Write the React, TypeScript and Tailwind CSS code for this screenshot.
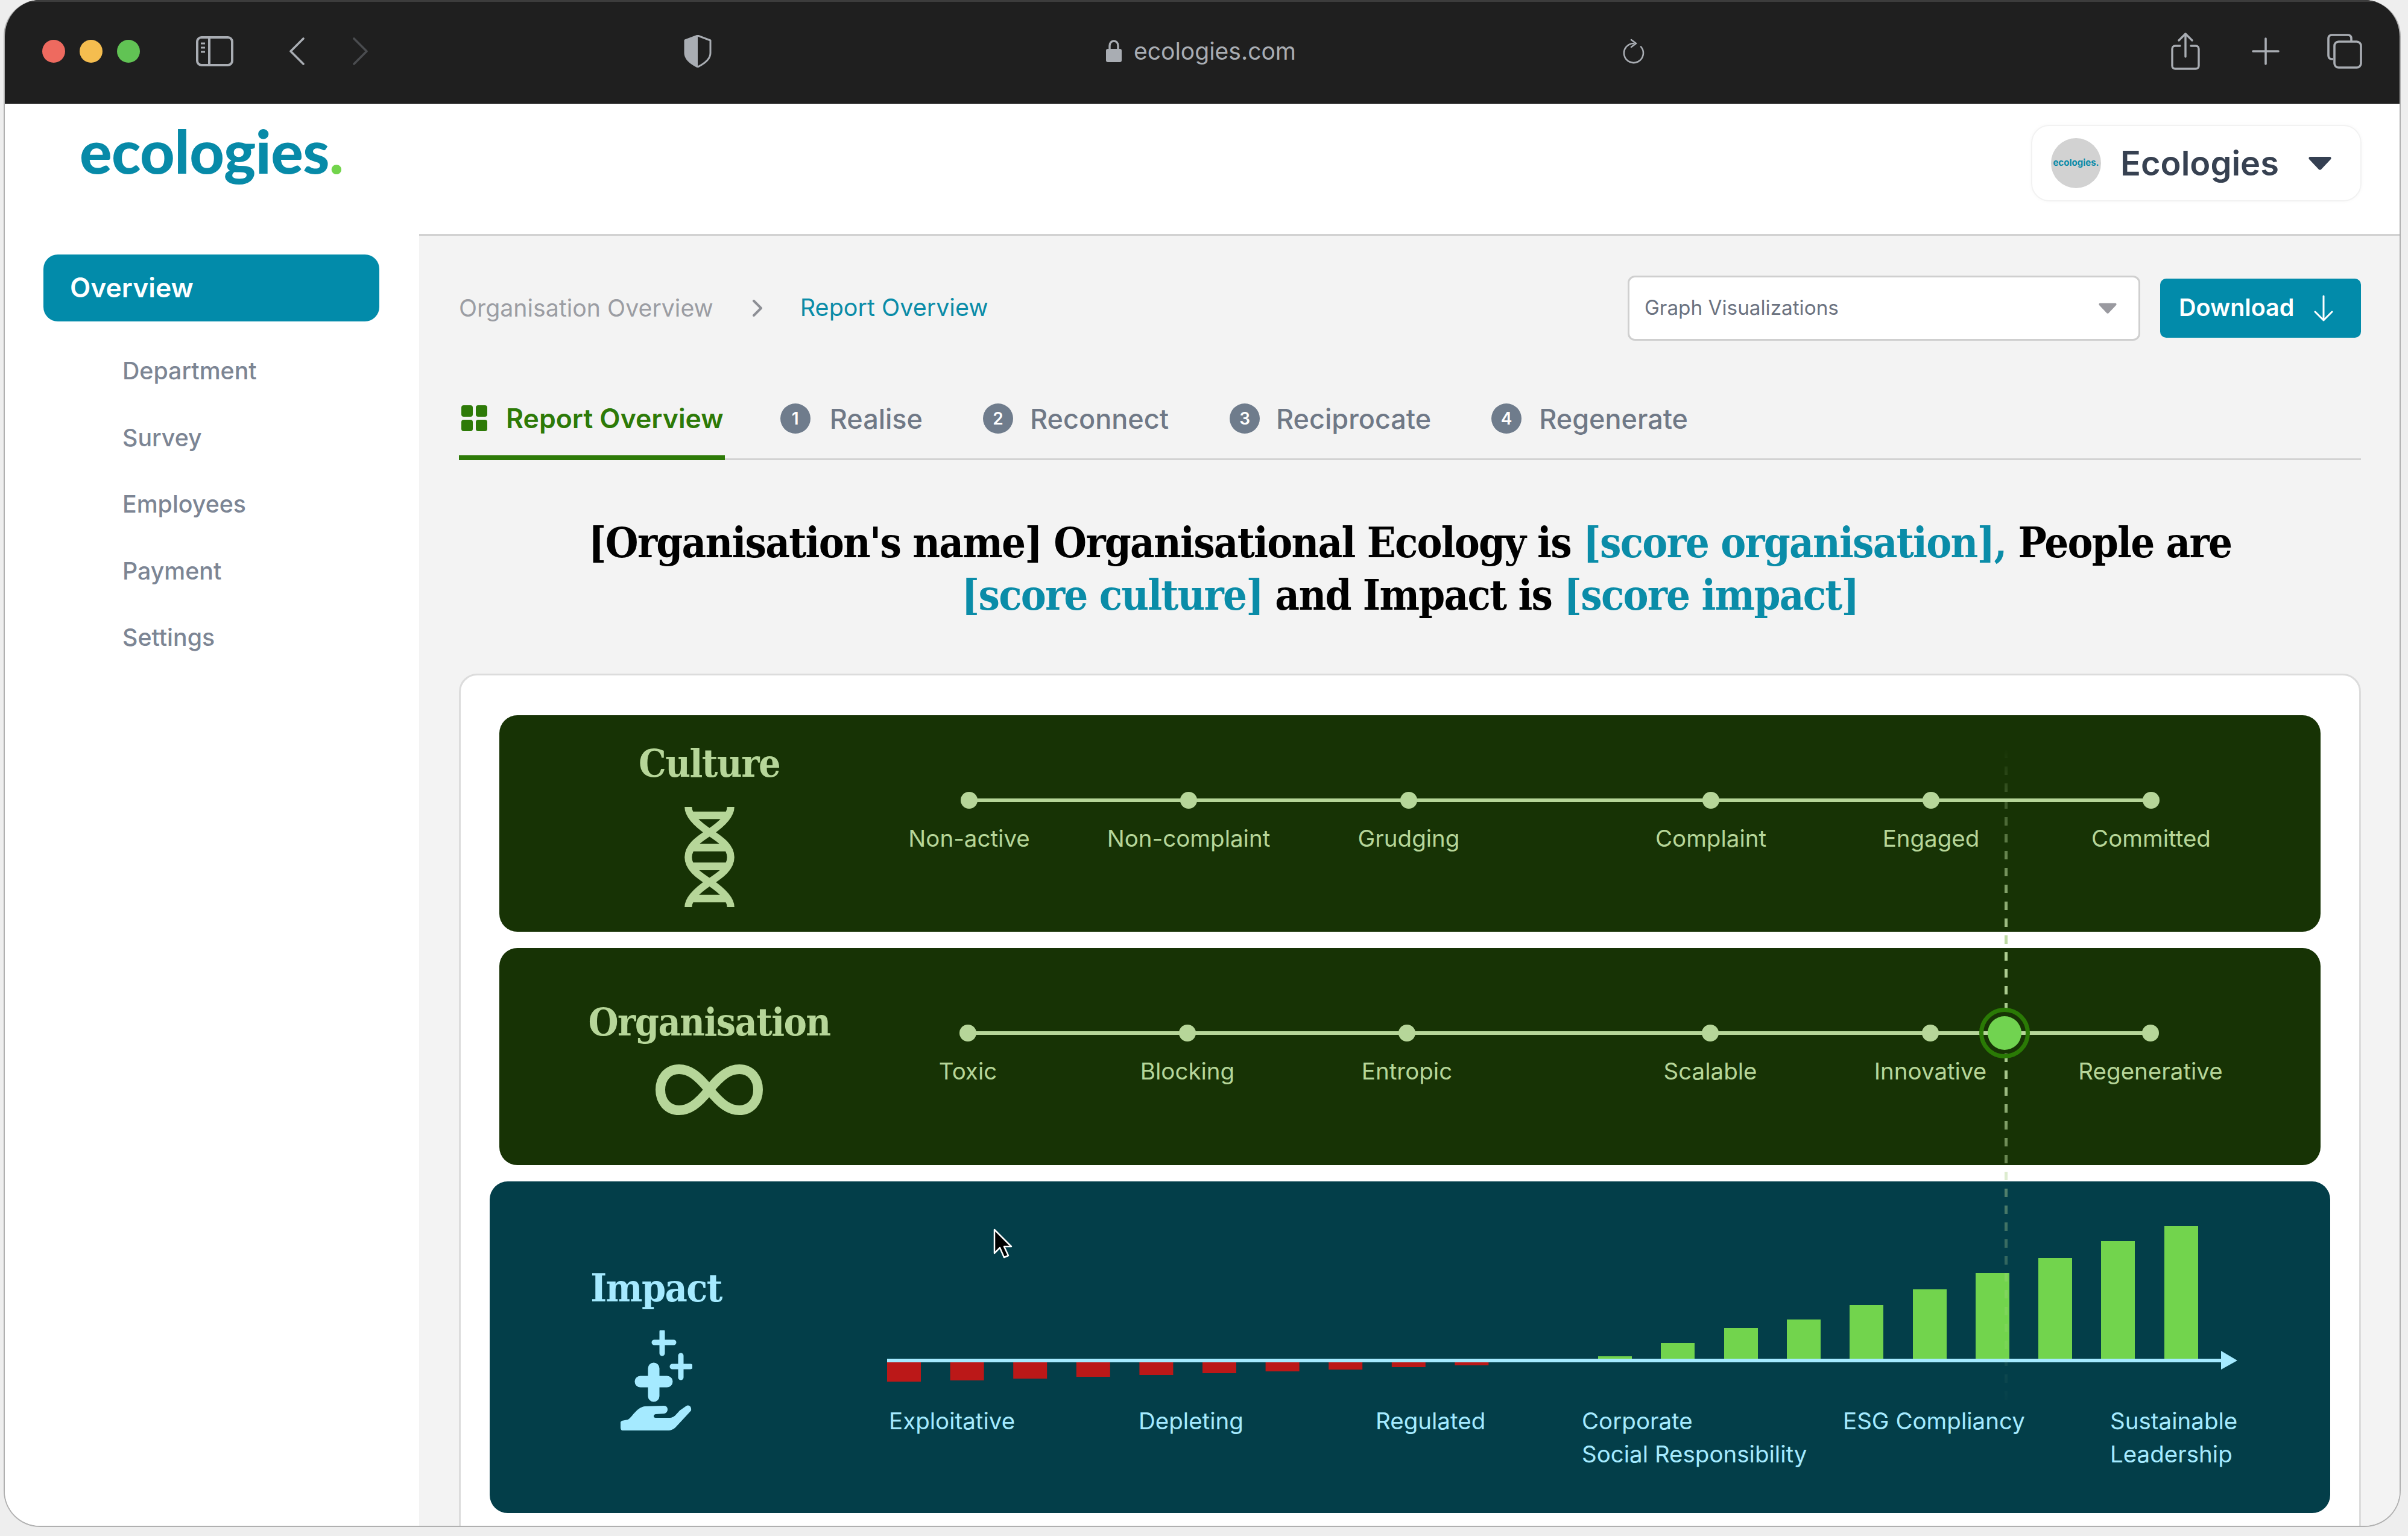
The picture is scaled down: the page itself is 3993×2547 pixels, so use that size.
import React from "react";

const SERIF = "font-['DejaVu_Serif_Condensed','Liberation_Serif',serif] font-bold";

const sideItems = ["Department", "Survey", "Employees", "Payment", "Settings"];
const tabs = [
  { n: 1, label: "Realise", cls: "ml-[92px] gap-[32px]" },
  { n: 2, label: "Reconnect", cls: "ml-[100px] gap-[28px]" },
  { n: 3, label: "Reciprocate", cls: "ml-[101px] gap-[27px]" },
  { n: 4, label: "Regenerate", cls: "ml-[100px] gap-[29px]" },
];
const culture = [
  { label: "Non-active", cls: "" },
  { label: "Non-complaint", cls: "ml-[336px]" },
  { label: "Grudging", cls: "ml-[337px]" },
  { label: "Complaint", cls: "ml-[473px]" },
  { label: "Engaged", cls: "ml-[337px]" },
  { label: "Committed", cls: "ml-[337px]" },
];
const organisation = [
  { label: "Toxic", cls: "" },
  { label: "Blocking", cls: "ml-[336px]" },
  { label: "Entropic", cls: "ml-[336px]" },
  { label: "Scalable", cls: "ml-[475px]" },
  { label: "Innovative", cls: "ml-[337px]" },
  { label: "Regenerative", cls: "ml-[337px]" },
];
const red = [32, 30, 27, 24, 21, 18, 15, 12, 8, 5];
const green = [2650, 2754, 2859, 2963, 3067, 3172, 3276, 3380, 3484, 3589];
const greenTop = [2252, 2230, 2205, 2191, 2167, 2141, 2114, 2089, 2061, 2036];

function SidebarIcon() {
  return (
    <svg width="62" height="50" viewBox="0 0 62 50" fill="none" stroke="#a9adb3" strokeWidth="4">
      <rect x="2" y="2" width="58" height="46" rx="7" />
      <path d="M22 2V48" />
      <path d="M8 12H15M8 19H15M8 26H15" strokeWidth="3" />
    </svg>
  );
}
function Shield() {
  return (
    <svg width="46" height="54" viewBox="0 0 46 54" fill="none">
      <path d="M23 1L44 9V30C44 41 33 48 23 53C13 48 2 41 2 30V9Z" stroke="#a9adb3" strokeWidth="3" strokeLinejoin="round" />
      <path d="M23 1V53C13 48 2 41 2 30V9Z" fill="#a9adb3" />
    </svg>
  );
}
function Reload() {
  return (
    <svg width="36" height="42" viewBox="0 0 36 42" fill="none" stroke="#a9adb3" strokeWidth="2.6" strokeLinecap="round" strokeLinejoin="round">
      <path d="M18 8A16 16 0 1 0 30 13.5" />
      <path d="M14 2L22 8L14 14" />
    </svg>
  );
}
function Share() {
  return (
    <svg width="48" height="62" viewBox="0 0 48 62" fill="none" stroke="#a9adb3" strokeWidth="3.4" strokeLinecap="round" strokeLinejoin="round">
      <path d="M15 22H7C4 22 2 24 2 27V55C2 58 4 60 7 60H41C44 60 46 58 46 55V27C46 24 44 22 41 22H33" />
      <path d="M24 40V3M13 13L24 2L35 13" />
    </svg>
  );
}
function Plus() {
  return (
    <svg width="46" height="46" viewBox="0 0 46 46" fill="none" stroke="#a9adb3" strokeWidth="3.6" strokeLinecap="round">
      <path d="M23 2V44M2 23H44" />
    </svg>
  );
}
function TabsIcon() {
  return (
    <svg width="58" height="58" viewBox="0 0 58 58" fill="none" stroke="#a9adb3" strokeWidth="3.6" strokeLinejoin="round">
      <path d="M10 42H8C4 42 2 40 2 36V8C2 4 4 2 8 2H34C38 2 40 4 40 8V13" />
      <rect x="12" y="13" width="44" height="43" rx="7" />
    </svg>
  );
}
function Lock() {
  return (
    <svg width="26" height="37" viewBox="0 0 26 37" fill="none">
      <path d="M6 17V10C6 5 9 2 13 2C17 2 20 5 20 10V17" stroke="#a9adb3" strokeWidth="3.4" />
      <rect x="0" y="15" width="26" height="22" rx="3" fill="#a9adb3" />
    </svg>
  );
}
function Caret({ w, h, color }: { w: number; h: number; color: string }) {
  return (
    <svg width={w} height={h} viewBox="0 0 40 24">
      <path d="M3 1H37C39 1 40 3 39 5L22 23C21 24 19 24 18 23L1 5C0 3 1 1 3 1Z" fill={color} />
    </svg>
  );
}
function Dna() {
  return (
    <svg width="83" height="166" viewBox="0 0 82 165" fill="none" stroke="#b6d699">
      <path d="M6 0C6 14 20 28 41 42C60 54 76 66 76 83C76 100 60 112 41 124C20 138 6 152 6 165" strokeWidth="12" />
      <path d="M76 0C76 14 62 28 41 42C22 54 6 66 6 83C6 100 22 112 41 124C62 138 76 152 76 165" strokeWidth="12" />
      <path d="M12 14H70M12 67H70M12 98H70M12 151H70" strokeWidth="12.5" />
    </svg>
  );
}
function Infinity() {
  return (
    <svg width="180" height="84" viewBox="0 0 180 84" fill="none" stroke="#b6d699" strokeWidth="16">
      <path d="M90 42C70 17 56 8 40 8C21 8 9 23 9 42C9 61 21 76 40 76C56 76 70 67 90 42C110 17 124 8 140 8C159 8 171 23 171 42C171 61 159 76 140 76C124 76 110 67 90 42Z" />
    </svg>
  );
}
function Hand() {
  return (
    <svg width="119" height="166" viewBox="0 0 119 166" fill="#a5eaff">
      <path d="M69 2V38M56 20H88" stroke="#a5eaff" strokeWidth="9" strokeLinecap="round" />
      <path d="M100 42V78M86 60H116" stroke="#a5eaff" strokeWidth="9" strokeLinecap="round" />
      <path d="M55 63V109M33 85H77" stroke="#a5eaff" strokeWidth="19" strokeLinecap="round" strokeLinejoin="round" />
      <path d="M2 150L12 148C18 146 26 128 40 126L72 125C80 125 80 137 72 138L58 139C54 140 54 145 58 145L82 145C88 145 92 140 98 133L108 126C114 122 118 127 117 133L92 160C88 164 84 166 78 166L4 166C1 166 0 164 0 160V152Z" />
    </svg>
  );
}
function Cursor() {
  return (
    <svg width="32" height="50" viewBox="0 0 32 50">
      <path d="M2 2V41L11 32L18 48L25 45L18 30H30Z" fill="#000" stroke="#fff" strokeWidth="2.5" strokeLinejoin="round" />
    </svg>
  );
}

function Track({ stops, pl, children }: { stops: { label: string; cls: string }[]; pl: string; children?: React.ReactNode }) {
  return (
    <div className={`${pl} pt-[127px]`}>
      <div className="relative flex">
        <div className="absolute left-[14px] right-[14px] top-[11px] h-[6px] bg-[#b6d699]" />
        {stops.map((s) => (
          <div key={s.label} className={`relative flex w-[28px] flex-col items-center ${s.cls}`}>
            <div className="h-[28px] w-[28px] rounded-full bg-[#b6d699]" />
            <div className="mt-[26px] whitespace-nowrap text-[38.5px] leading-[46px] text-[#b6d699]">{s.label}</div>
          </div>
        ))}
        {children}
      </div>
    </div>
  );
}

export default function App() {
  return (
    <div className="relative h-[2547px] w-[3993px] overflow-hidden bg-[#eeeeee] pl-[6px] font-['Inter',sans-serif]">
      <div className="flex h-[2532px] w-[3975px] flex-col overflow-hidden rounded-[60px] border-x-[2px] border-b-[2px] border-[#b0b0b0] bg-white">
        {/* Title bar */}
        <div className="flex h-[172px] shrink-0 items-center border-t-[3px] border-[#3c3c3c] bg-[#1f1f1f] pb-[6px]">
          <div className="ml-[62px] h-[38px] w-[38px] rounded-full bg-[#ee6a5f]" />
          <div className="ml-[24px] h-[38px] w-[38px] rounded-full bg-[#f5bd4f]" />
          <div className="ml-[24px] h-[38px] w-[38px] rounded-full bg-[#61c354]" />
          <div className="ml-[93px]"><SidebarIcon /></div>
          <svg className="ml-[92px]" width="26" height="46" viewBox="0 0 26 46" fill="none" stroke="#a9adb3" strokeWidth="3.6" strokeLinecap="round" strokeLinejoin="round"><path d="M24 2L3 23L24 44" /></svg>
          <svg className="ml-[80px]" width="26" height="46" viewBox="0 0 26 46" fill="none" stroke="#4a4c4f" strokeWidth="3.6" strokeLinecap="round" strokeLinejoin="round"><path d="M2 2L23 23L2 44" /></svg>
          <div className="ml-[523px]"><Shield /></div>
          <div className="ml-[654px] flex items-center gap-[20px]">
            <Lock />
            <span className="text-[39px] leading-none text-[#a9adb3]">ecologies.com</span>
          </div>
          <div className="ml-[542px]"><Reload /></div>
          <div className="ml-[873px]"><Share /></div>
          <div className="ml-[86px]"><Plus /></div>
          <div className="ml-[79px]"><TabsIcon /></div>
        </div>

        <div className="flex min-h-0 flex-1">
          {/* Sidebar */}
          <div className="w-[687px] shrink-0 bg-white">
            <div className="flex h-[250px] items-start pl-[124px] pt-[18px] font-['Lato',sans-serif] text-[100px] font-black leading-[118px] tracking-[-0.5px] text-[#078aa8]">
              ecologies<span className="text-[#72d44b]">.</span>
            </div>
            <div className="ml-[64px] flex h-[111px] w-[557px] items-center rounded-[24px] bg-[#028baa] pl-[44px] text-[44.5px] font-semibold text-white">Overview</div>
            <div className="mt-[57px] flex flex-col gap-[60.5px] pl-[195px]">
              {sideItems.map((t) => (
                <div key={t} className="text-[39.3px] font-medium leading-[50px] text-[#7c8594]">{t}</div>
              ))}
            </div>
          </div>

          {/* Right column */}
          <div className="flex min-w-0 flex-1 flex-col">
            <div className="flex h-[219px] shrink-0 items-start justify-end border-b-[3px] border-[#d2d2d2] bg-white pr-[63px] pt-[35px]">
              <div className="flex h-[127px] w-[548px] items-center rounded-[30px] border-[2px] border-[#f2f2f2] pl-[31px] shadow-[0_0_6px_rgba(0,0,0,0.03)]">
                <div className="flex h-[83px] w-[83px] items-center justify-center rounded-full bg-[#d2d2d2] text-[15px] font-bold text-[#078aa8]">ecologies.</div>
                <span className="ml-[32px] text-[56px] font-semibold leading-none text-[#374151]">Ecologies</span>
                <div className="ml-[48px]"><Caret w={40} h={23} color="#354052" /></div>
              </div>
            </div>

            <div className="min-h-0 flex-1 overflow-hidden bg-[#f3f3f3] pl-[66px] pr-[64px] pt-[66px]">
              {/* Toolbar */}
              <div className="flex h-[108px] items-center">
                <span className="text-[39.3px] leading-none text-[#9b9da3]">Organisation Overview</span>
                <svg className="ml-[63px]" width="20" height="28" viewBox="0 0 20 28" fill="none" stroke="#8d8f95" strokeWidth="4" strokeLinecap="round" strokeLinejoin="round"><path d="M4 2L16 14L4 26" /></svg>
                <span className="ml-[61px] text-[39.5px] leading-none text-[#0a8ca8]">Report Overview</span>
                <div className="ml-auto flex h-[108px] w-[850px] items-center justify-between rounded-[12px] border-[3px] border-[#cfcfcf] bg-white pl-[25px] pr-[34px]">
                  <span className="text-[33.3px] text-[#6b7280]">Graph Visualizations</span>
                  <Caret w={34} h={18} color="#9a9aa0" />
                </div>
                <div className="ml-[33px] flex h-[98px] w-[333px] items-center rounded-[10px] bg-[#028baa] pl-[31px]">
                  <span className="text-[39.5px] font-semibold text-white">Download</span>
                  <svg className="ml-[32px]" width="34" height="44" viewBox="0 0 34 44" fill="none" stroke="#fff" strokeWidth="3" strokeLinecap="round" strokeLinejoin="round"><path d="M17 2V42M3 28L17 42L31 28" /></svg>
                </div>
              </div>

              {/* Tabs */}
              <div className="mt-[95px] flex border-b-[3px] border-[#d2d2d2]">
                <div className="-mb-[3px] flex h-[103px] items-start rounded-t-[4px] border-b-[8px] border-[#2d7a07] pl-[4px] pr-[2px] pt-[12px]">
                  <div className="grid w-[43px] grid-cols-2 gap-[5px]">
                    <div className="h-[19px] rounded-[4px] bg-[#2d7a07]" />
                    <div className="h-[19px] rounded-[4px] bg-[#2d7a07]" />
                    <div className="h-[19px] rounded-[4px] bg-[#2d7a07]" />
                    <div className="h-[19px] rounded-[4px] bg-[#2d7a07]" />
                  </div>
                  <span className="-mt-[3px] ml-[31px] text-[44.6px] font-semibold leading-[50px] text-[#2d7a07]">Report Overview</span>
                </div>
                {tabs.map((t) => (
                  <div key={t.n} className={`flex h-[68px] items-center ${t.cls}`}>
                    <div className="flex h-[50px] w-[50px] items-center justify-center rounded-full bg-[#6f7c8c] text-[28px] font-semibold text-white">{t.n}</div>
                    <span className="text-[45px] font-medium leading-none text-[#6f7886]">{t.label}</span>
                  </div>
                ))}
              </div>

              {/* Headline */}
              <h1 className={`mt-[93px] text-center text-[70px] leading-[87px] tracking-[-1.8px] text-black ${SERIF}`}>
                [Organisation's name] Organisational Ecology is <span className="text-[#0a8ca8]">[score organisation],</span> People are
                <br />
                <span className="text-[#0a8ca8]">[score culture]</span> and Impact is <span className="text-[#0a8ca8]">[score impact]</span>
              </h1>

              {/* Card */}
              <div className="relative mt-[87px] h-[1500px] rounded-[30px] border-[3px] border-[#dcdcdc] bg-white px-[64px] pt-[66px]">
                {/* Culture */}
                <div className="flex h-[359px] rounded-[30px] bg-[#173305]">
                  <div className="flex w-[696px] shrink-0 flex-col items-center pt-[45px]">
                    <div className={`text-[64px] leading-[70px] tracking-[-1.6px] text-[#b6d699] ${SERIF}`}>Culture</div>
                    <div className="mt-[37px]"><Dna /></div>
                  </div>
                  <Track stops={culture} pl="pl-[69px]" />
                </div>

                {/* Organisation */}
                <div className="mt-[27px] flex h-[360px] rounded-[30px] bg-[#173305]">
                  <div className="flex w-[696px] shrink-0 flex-col items-center pt-[88px]">
                    <div className={`text-[64px] leading-[70px] tracking-[-1.6px] text-[#b6d699] ${SERIF}`}>Organisation</div>
                    <div className="mt-[35px]"><Infinity /></div>
                  </div>
                  <Track stops={organisation} pl="pl-[67px]">
                    <div className="absolute left-[1691px] top-[-28px] z-20 flex h-[84px] w-[84px] items-center justify-center rounded-full border-[7px] border-[#2a7a05]">
                      <div className="h-[56px] w-[56px] rounded-full bg-[#71d350]" />
                    </div>
                  </Track>
                </div>

                {/* Impact */}
                <div className="-mx-[16px] mt-[27px] flex h-[550px] rounded-[30px] bg-[#033e49]">
                  <div className="flex w-[552px] shrink-0 flex-col items-center pt-[142px]">
                    <div className={`text-[64px] leading-[70px] tracking-[-1.6px] text-[#a5eaff] ${SERIF}`}>Impact</div>
                    <div className="mt-[35px]"><Hand /></div>
                  </div>
                  <div className="ml-[107px] pt-[74px]">
                    <svg className="block" width="2239" height="264" viewBox="0 0 2239 264">
                      {red.map((h, i) => (
                        <rect key={i} x={i * 104.6} y={226} width={56} height={h} fill="#bb1818" />
                      ))}
                      {green.map((x, i) => (
                        <rect key={x} x={x - 1471} y={greenTop[i] - 2036} width={56} height={2256 - greenTop[i]} fill="#72d44d" />
                      ))}
                      <rect x="0" y="220" width="2216" height="6" fill="#a5eaff" />
                      <path d="M2212 207L2239 223L2212 238Z" fill="#a5eaff" />
                    </svg>
                    <div className="mt-[32px] grid grid-cols-[414px_393px_342px_433px_443px_auto] pl-[3px] text-[38.5px] leading-[55px] text-[#a5eaff]">
                      <div>Exploitative</div>
                      <div>Depleting</div>
                      <div>Regulated</div>
                      <div>Corporate<br />Social Responsibility</div>
                      <div>ESG Compliancy</div>
                      <div>Sustainable<br />Leadership</div>
                    </div>
                  </div>
                </div>

                {/* Score marker */}
                <svg className="absolute left-[2560px] top-[123px] z-10" width="5" height="1089" viewBox="0 0 5 1089">
                  <defs>
                    <linearGradient id="markerFade" gradientUnits="userSpaceOnUse" x1="0" y1="0" x2="0" y2="1089">
                      <stop offset="0" stopColor="#b6d699" stopOpacity="0" />
                      <stop offset="0.1" stopColor="#b6d699" stopOpacity="0.3" />
                      <stop offset="0.3" stopColor="#b6d699" stopOpacity="0.95" />
                      <stop offset="0.5" stopColor="#b6d699" stopOpacity="0.9" />
                      <stop offset="0.6" stopColor="#b6d699" stopOpacity="0.55" />
                      <stop offset="0.75" stopColor="#b6d699" stopOpacity="0.3" />
                      <stop offset="1" stopColor="#b6d699" stopOpacity="0" />
                    </linearGradient>
                  </defs>
                  <path d="M2.5 0V1089" stroke="url(#markerFade)" strokeWidth="5" strokeDasharray="14 14" />
                </svg>
              </div>
            </div>
          </div>
        </div>
      </div>
      <div className="absolute left-[1647px] top-[2037px] z-30"><Cursor /></div>
    </div>
  );
}
